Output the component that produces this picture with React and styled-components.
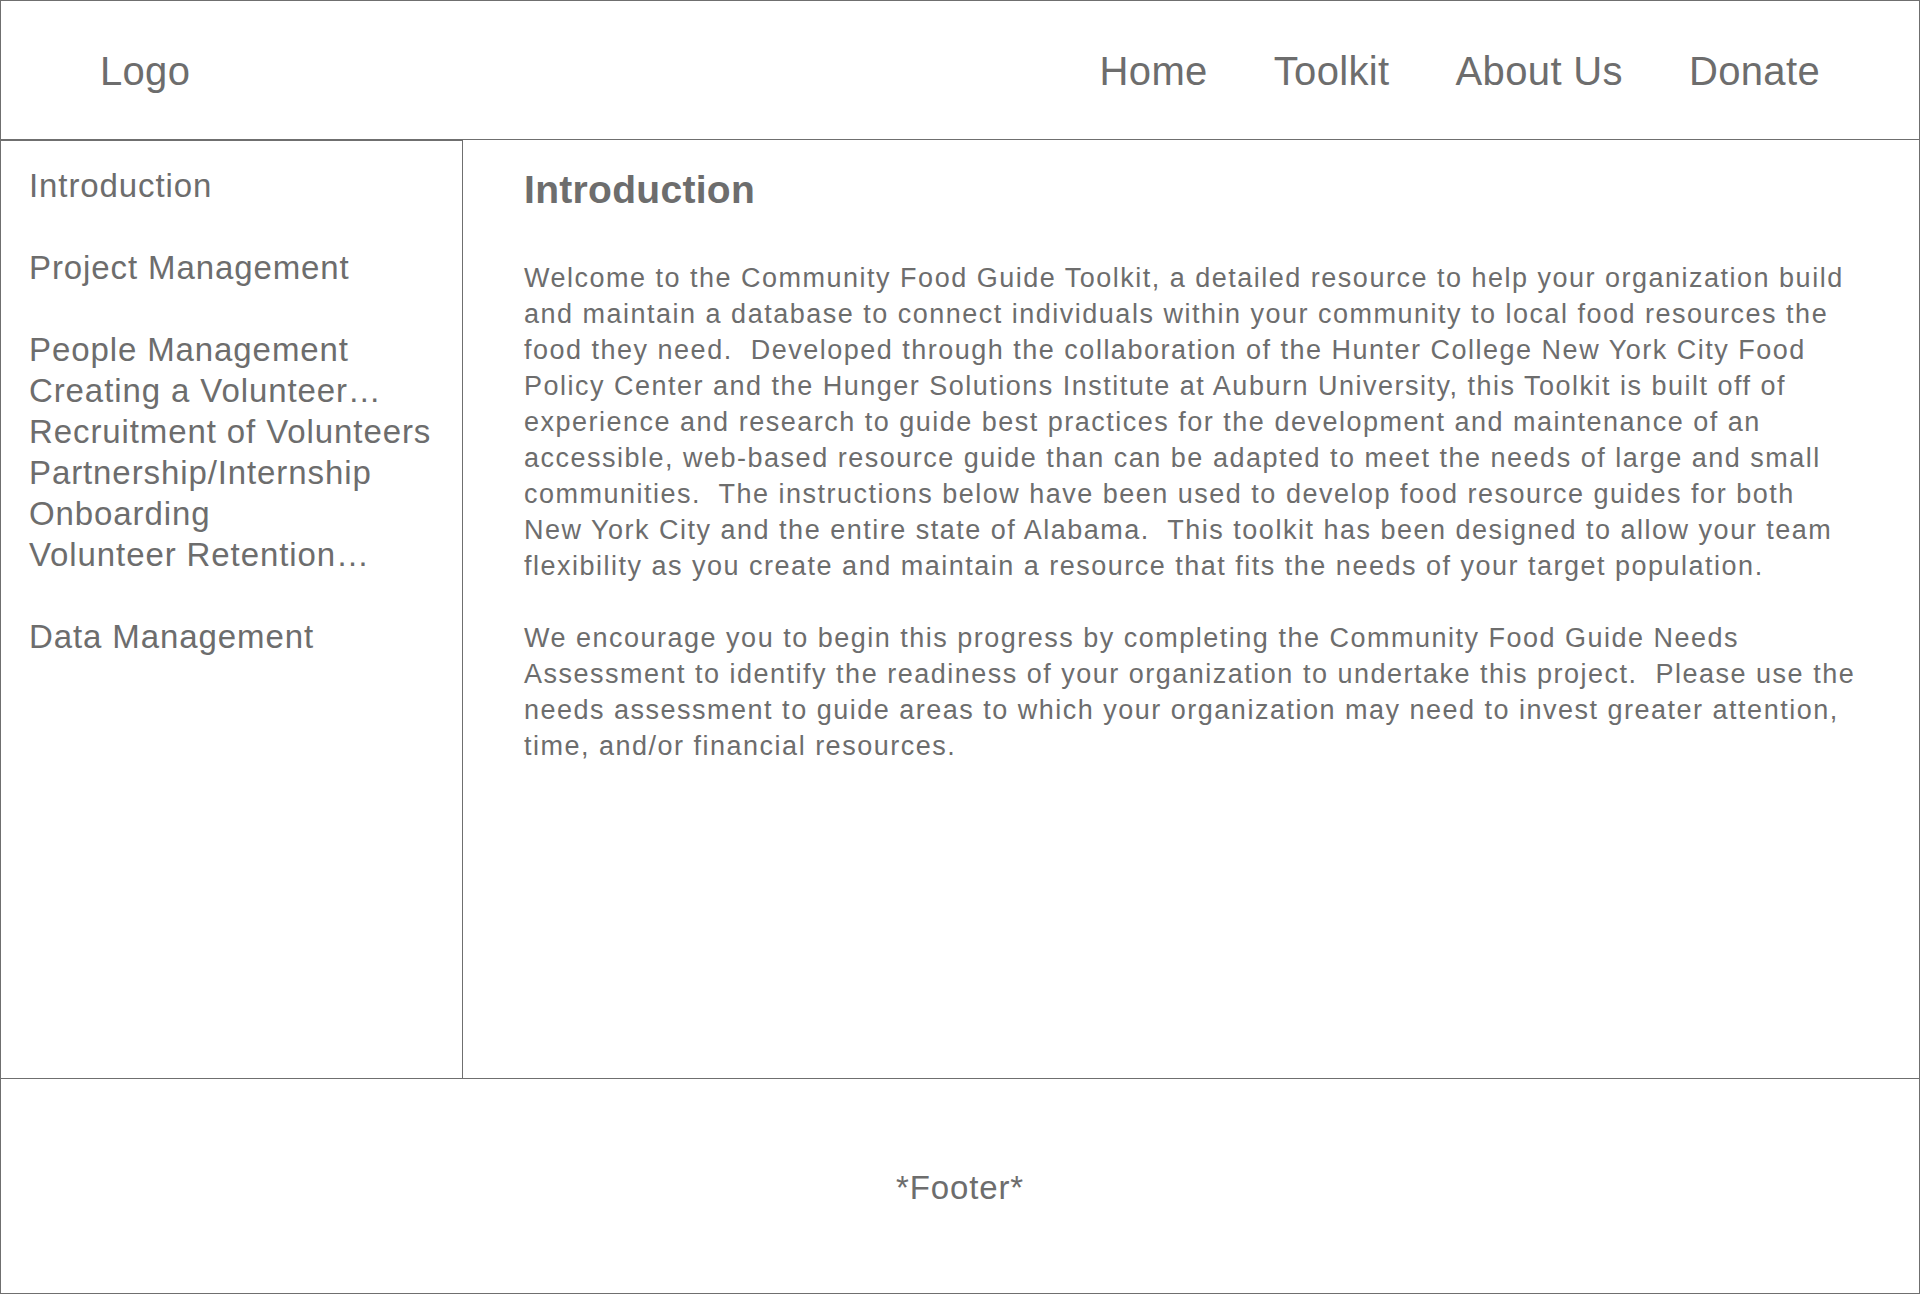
import React from "react";
import styled, { createGlobalStyle } from "styled-components";

const GlobalStyle = createGlobalStyle`
  html, body {
    margin: 0;
    padding: 0;
    background: #ffffff;
  }
  body {
    font-family: "Liberation Sans", Arial, Helvetica, sans-serif;
    color: #6d6d6d;
  }
  * { box-sizing: border-box; }
`;

const LINE = "#6f6f6f";

const Page = styled.div`
  width: 1920px;
  display: flex;
  flex-direction: column;
`;

const Header = styled.header`
  height: 140px;
  border: 1px solid ${LINE};
  display: flex;
  align-items: center;
  justify-content: space-between;
  padding: 0 99px 0 99px;
`;

const Logo = styled.div`
  font-size: 40px;
  line-height: 1;
  letter-spacing: 0.3px;
  color: #6d6d6d;
  padding-top: 2px;
`;

const Nav = styled.nav`
  display: flex;
  align-items: center;
  gap: 66px;
`;

const NavLink = styled.a`
  font-size: 40px;
  line-height: 1;
  letter-spacing: 0.35px;
  color: #6d6d6d;
  text-decoration: none;
  padding-top: 2px;
`;

const Main = styled.main`
  height: 939px;
  display: grid;
  grid-template-columns: 462px 1fr;
  border-left: 1px solid ${LINE};
  border-right: 1px solid ${LINE};
  border-bottom: 1px solid ${LINE};
`;

const Sidebar = styled.aside`
  border-top: 1px solid ${LINE};
  border-right: 1px solid ${LINE};
  padding: 24px 0 0 28px;
`;

const SideList = styled.ul`
  list-style: none;
  margin: 0;
  padding: 0;
`;

const SideItem = styled.li`
  font-size: 33px;
  line-height: 41px;
  letter-spacing: 0.9px;
  color: #6d6d6d;
  white-space: nowrap;
  margin-top: ${(p) => (p.$groupStart ? "41px" : "0")};
  &:first-child { margin-top: 0; }
`;

const Content = styled.section`
  padding: 28px 60px 0 61px;
`;

const Title = styled.h1`
  margin: 0;
  font-size: 39px;
  line-height: 44px;
  font-weight: 700;
  letter-spacing: 0.3px;
  color: #6d6d6d;
`;

const Paragraph = styled.p`
  margin: 0;
  margin-top: ${(p) => p.$gap};
  font-size: 27px;
  line-height: 36px;
  letter-spacing: 1.5px;
  color: #6d6d6d;
  white-space: pre-wrap;
`;

const Footer = styled.footer`
  height: 215px;
  border-left: 1px solid ${LINE};
  border-right: 1px solid ${LINE};
  border-bottom: 1px solid ${LINE};
  display: flex;
  align-items: center;
  justify-content: center;
  padding-top: 4px;
`;

const FooterText = styled.span`
  font-size: 33px;
  letter-spacing: 0.85px;
  color: #6d6d6d;
`;

const sideItems = [
  { label: "Introduction" },
  { label: "Project Management", group: true },
  { label: "People Management", group: true },
  { label: "Creating a Volunteer…" },
  { label: "Recruitment of Volunteers" },
  { label: "Partnership/Internship" },
  { label: "Onboarding" },
  { label: "Volunteer Retention…" },
  { label: "Data Management", group: true },
];

const para1 =
  "Welcome to the Community Food Guide Toolkit, a detailed resource to help your organization build and maintain a database to connect individuals within your community to local food resources the food they need.  Developed through the collaboration of the Hunter College New York City Food Policy Center and the Hunger Solutions Institute at Auburn University, this Toolkit is built off of experience and research to guide best practices for the development and maintenance of an accessible, web-based resource guide than can be adapted to meet the needs of large and small communities.  The instructions below have been used to develop food resource guides for both New York City and the entire state of Alabama.  This toolkit has been designed to allow your team flexibility as you create and maintain a resource that fits the needs of your target population.";

const para2 =
  "We encourage you to begin this progress by completing the Community Food Guide Needs Assessment to identify the readiness of your organization to undertake this project.  Please use the needs assessment to guide areas to which your organization may need to invest greater attention, time, and/or financial resources.";

export default function App() {
  return (
    <>
      <GlobalStyle />
      <Page>
        <Header>
          <Logo>Logo</Logo>
          <Nav>
            <NavLink href="#">Home</NavLink>
            <NavLink href="#">Toolkit</NavLink>
            <NavLink href="#">About Us</NavLink>
            <NavLink href="#">Donate</NavLink>
          </Nav>
        </Header>
        <Main>
          <Sidebar>
            <SideList>
              {sideItems.map((it) => (
                <SideItem key={it.label} $groupStart={it.group}>
                  {it.label}
                </SideItem>
              ))}
            </SideList>
          </Sidebar>
          <Content>
            <Title>Introduction</Title>
            <Paragraph $gap="48px">{para1}</Paragraph>
            <Paragraph $gap="36px">{para2}</Paragraph>
          </Content>
        </Main>
        <Footer>
          <FooterText>*Footer*</FooterText>
        </Footer>
      </Page>
    </>
  );
}
